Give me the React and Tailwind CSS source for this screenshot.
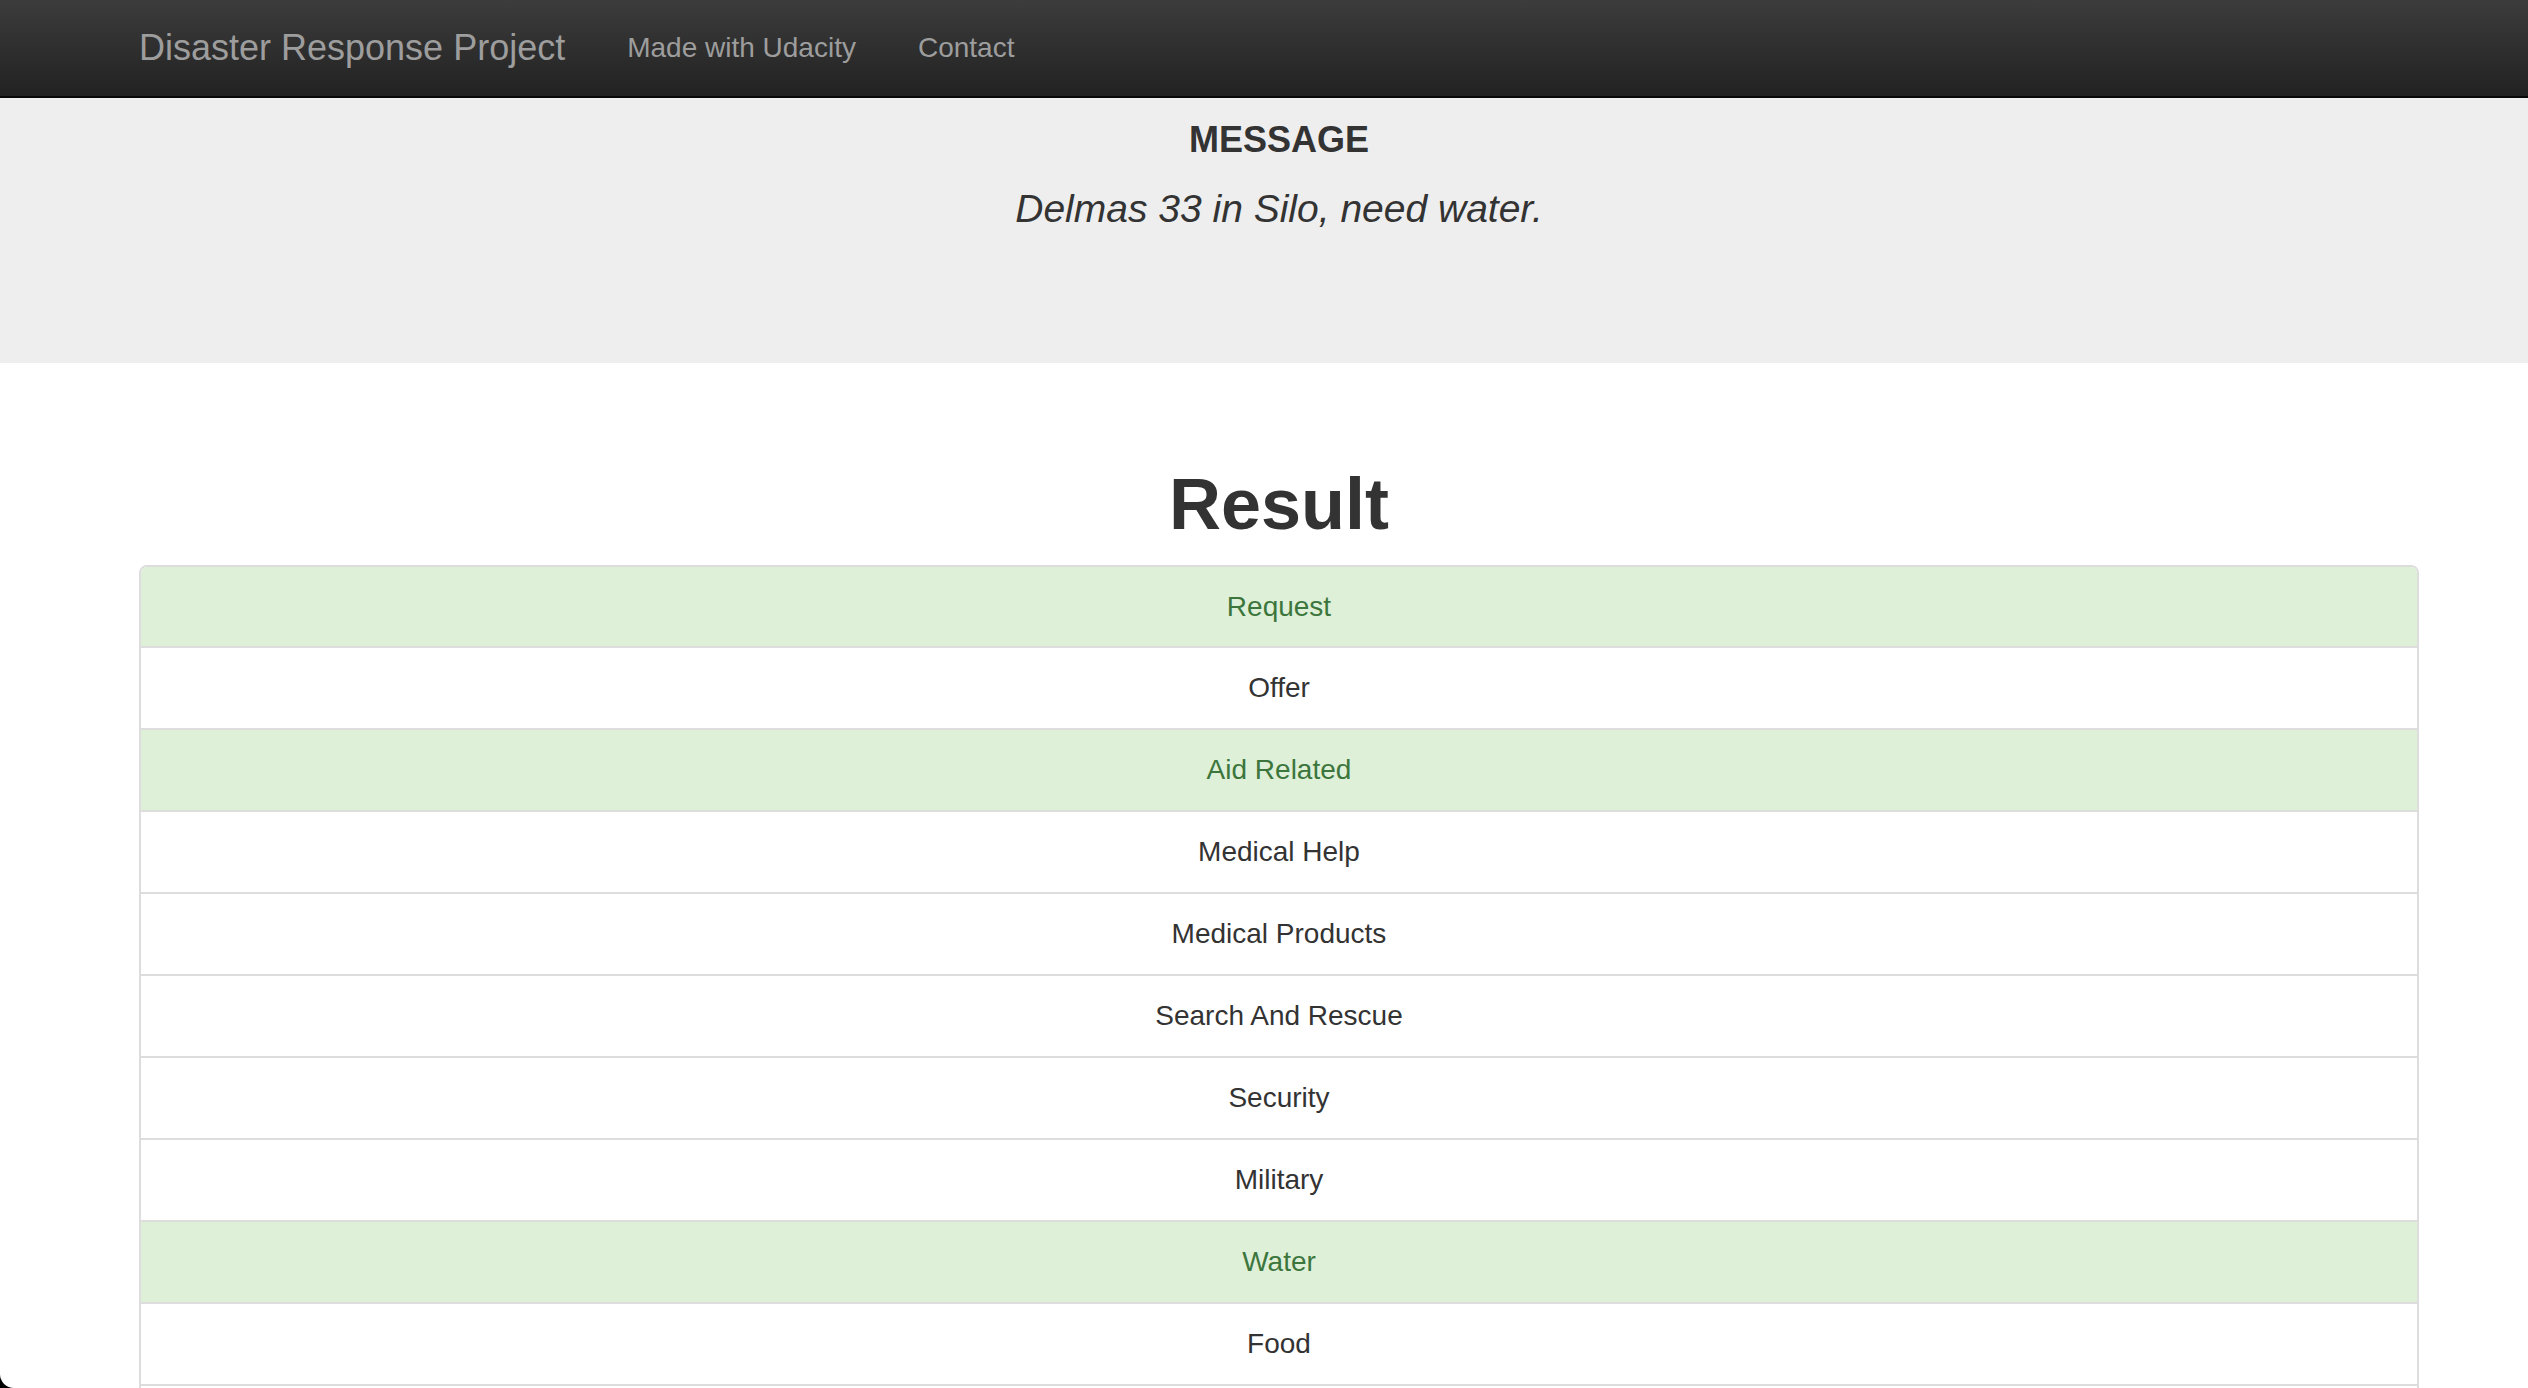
import React from 'react';

const categories = [
  { name: 'Request', hit: true },
  { name: 'Offer', hit: false },
  { name: 'Aid Related', hit: true },
  { name: 'Medical Help', hit: false },
  { name: 'Medical Products', hit: false },
  { name: 'Search And Rescue', hit: false },
  { name: 'Security', hit: false },
  { name: 'Military', hit: false },
  { name: 'Water', hit: true },
  { name: 'Food', hit: false },
];

function App() {
  return (
    <div className="h-[1388px] overflow-hidden bg-black font-['Liberation_Sans',Arial,sans-serif] text-[#333]">
      <div className="h-full overflow-hidden rounded-bl-[14px] bg-white">
        {/* navbar */}
        <nav className="h-[98px] border-b-2 border-[#080808] bg-gradient-to-b from-[#3c3c3c] to-[#222]">
          <div className="ml-[109px] flex h-full w-[2340px] items-center px-[30px] text-[#9d9d9d]">
            <a className="pr-[62px] text-[36px]">Disaster Response Project</a>
            <a className="pr-[62px] text-[28px]">Made with Udacity</a>
            <a className="text-[28px]">Contact</a>
          </div>
        </nav>

        {/* jumbotron */}
        <div className="h-[265px] bg-[#eee]">
          <div className="ml-[109px] w-[2340px] px-[30px] pt-[22px] text-center">
            <h4 className="text-[36px] leading-[40px] font-bold">MESSAGE</h4>
            <p className="mt-[19px] text-[39px] leading-[59px] font-light italic">Delmas 33 in Silo, need water.</p>
          </div>
        </div>

        {/* result */}
        <div className="ml-[109px] w-[2340px] px-[30px]">
          <h1 className="mt-[102px] mb-[21px] text-center text-[72px] leading-[79px] font-bold">Result</h1>
          <ul className="divide-y-2 divide-[#ddd] overflow-hidden rounded-t-[8px] border-2 border-[#ddd]">
            {categories.map((c, i) => (
              <li
                key={c.name}
                className={(i === 0 ? 'h-[81px] ' : 'h-[82px] ') + (c.hit
                  ? 'flex items-center justify-center bg-[#dff0d8] text-[28px] text-[#3c763d]'
                  : 'flex items-center justify-center bg-white text-[28px] text-[#333]')}
              >
                {c.name}
              </li>
            ))}
            <li className="h-[82px] bg-white"></li>
          </ul>
        </div>
      </div>
    </div>
  );
}

export default App;
